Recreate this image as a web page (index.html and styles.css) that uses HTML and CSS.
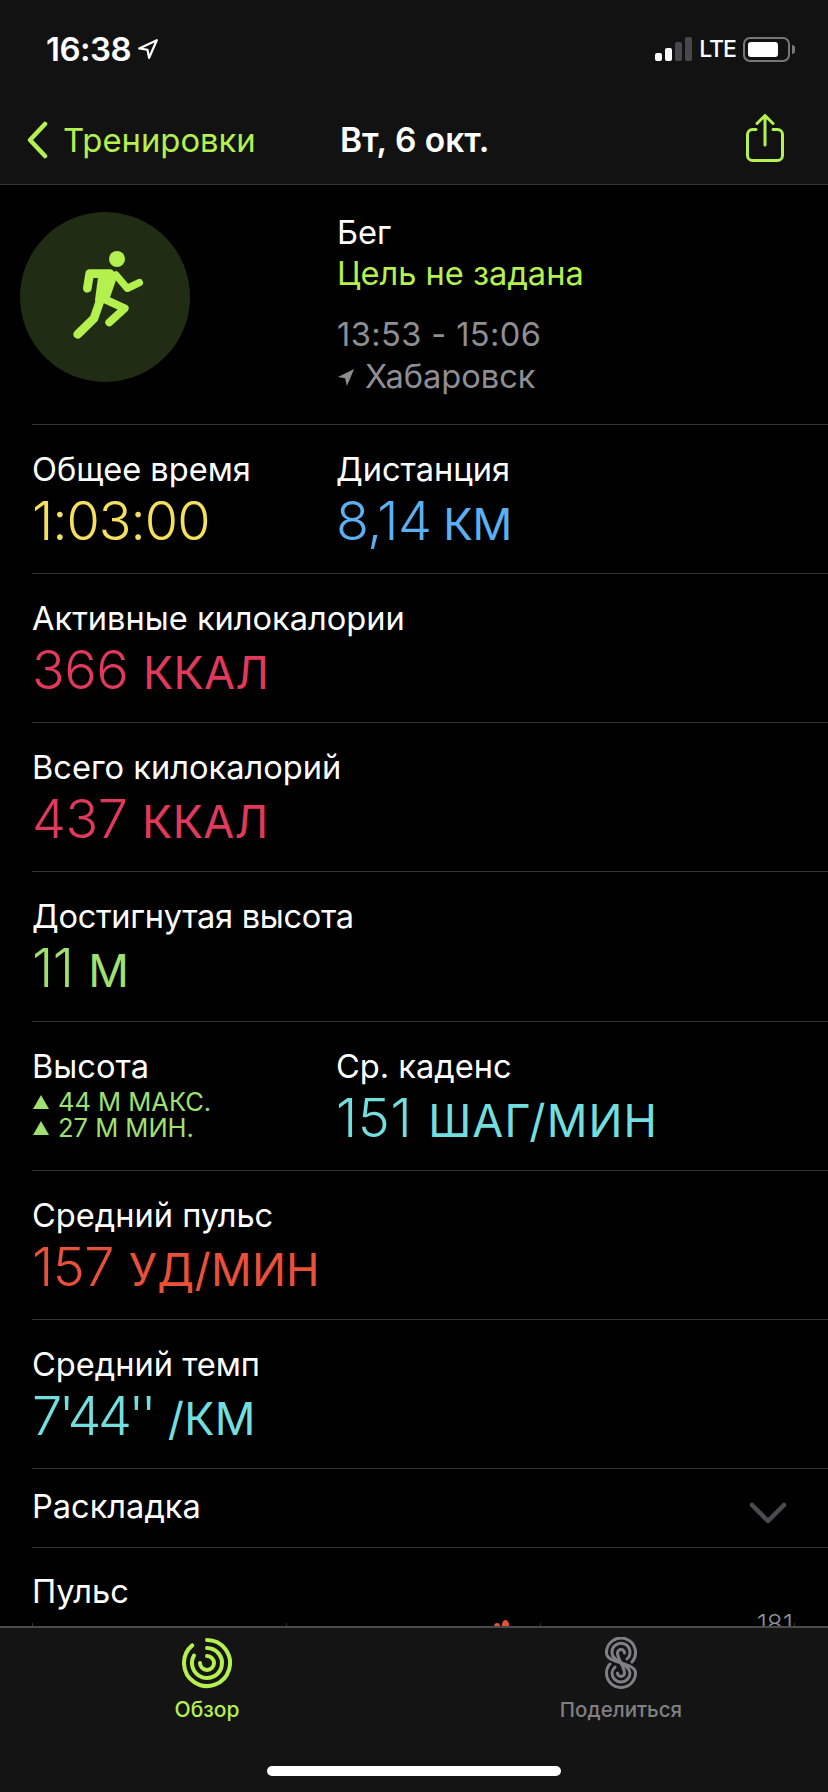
FILE: index.html
```html
<!DOCTYPE html>
<html lang="ru">
<head>
<meta charset="utf-8">
<title>Тренировка</title>
<link rel="stylesheet" href="styles.css">
</head>
<body>
<div class="screen">
  <header class="top">
    <div class="status">
      <div class="status-left">
        <span class="clock">16:38</span>
        <svg class="loc" viewBox="0 0 20 20"><path d="M18 2 2 9.500l7.500 1.200L11 18z" fill="none" stroke="#fff" stroke-width="2" stroke-linejoin="round"/></svg>
      </div>
      <div class="status-right">
        <div class="signal"><i class="b1 on"></i><i class="b2 on"></i><i class="b3"></i><i class="b4"></i></div>
        <span class="lte">LTE</span>
        <div class="battery"><div class="battery-fill"></div></div>
        <div class="battery-cap"></div>
      </div>
    </div>
    <nav class="nav">
      <div class="back">
        <svg class="chev" viewBox="0 0 24 38"><path d="M20 3 5 19l15 16" fill="none" stroke="#b4f04e" stroke-width="4.500" stroke-linecap="round" stroke-linejoin="round"/></svg>
        <span>Тренировки</span>
      </div>
      <div class="nav-title">Вт, 6 окт.</div>
      <svg class="share" viewBox="0 0 38 48"><path d="M10 15.500H6.500a5 5 0 0 0-5 5v21a5 5 0 0 0 5 5h25a5 5 0 0 0 5-5v-21a5 5 0 0 0-5-5H27M19 31V2M11 9.500l8-8 8 8" fill="none" stroke="#b4f04e" stroke-width="3" stroke-linecap="round" stroke-linejoin="round"/></svg>
    </nav>
  </header>
  <main class="content">
    <section class="hero">
      <div class="hero-icon">
        <svg class="runner" viewBox="30 36 510 510">
          <circle cx="321" cy="177" r="24" fill="#b4f04e"/>
          <g fill="none" stroke="#b4f04e" stroke-linecap="round" stroke-linejoin="round">
            <path d="M300 221H239L232 265" stroke-width="26"/>
            <path d="M318 225 352 265 388 248" stroke-width="22"/>
            <path d="M296 228 252 355 203 403" stroke-width="26"/>
            <path d="M285 298 344 325 298 367" stroke-width="24"/>
            <path d="M272 225H316L290 300H262Z" fill="#b4f04e" stroke-width="14"/>
          </g>
        </svg>
      </div>
      <div class="hero-text">
        <div class="label">Бег</div>
        <div class="label lime">Цель не задана</div>
        <div class="label grey gap times">13:53 - 15:06</div>
        <div class="label grey place"><svg class="loc2" viewBox="0 0 20 20"><path d="M19 1 1 10l8 1.500L11 20z" fill="#8e8e93"/></svg>Хабаровск</div>
      </div>
    </section>

    <section class="row split">
      <div class="cell"><div class="label">Общее время</div><div class="value yellow">1:03:00</div></div>
      <div class="cell"><div class="label">Дистанция</div><div class="value blue">8,14 <span class="unit narrow">КМ</span></div></div>
    </section>
    <section class="row"><div class="label">Активные килокалории</div><div class="value red">366 <span class="unit">ККАЛ</span></div></section>
    <section class="row"><div class="label">Всего килокалорий</div><div class="value red">437 <span class="unit">ККАЛ</span></div></section>
    <section class="row"><div class="label snug">Достигнутая высота</div><div class="value green">11 <span class="unit">М</span></div></section>
    <section class="row split">
      <div class="cell">
        <div class="label">Высота</div>
        <div class="minis">
          <div class="mini"><svg class="tri" viewBox="0 0 16 14"><path d="M8 0l8 14H0z"/></svg>44 М МАКС.</div>
          <div class="mini"><svg class="tri" viewBox="0 0 16 14"><path d="M8 0l8 14H0z"/></svg>27 М МИН.</div>
        </div>
      </div>
      <div class="cell"><div class="label">Ср. каденс</div><div class="value teal wide-num">151 <span class="unit wide">ШАГ/МИН</span></div></div>
    </section>
    <section class="row"><div class="label">Средний пульс</div><div class="value orange">157 <span class="unit">УД/МИН</span></div></section>
    <section class="row"><div class="label">Средний темп</div><div class="value teal"><span class="tight">7'44''</span> <span class="unit">/КМ</span></div></section>
    <section class="row-short">
      <div class="label">Раскладка</div>
      <svg class="down" viewBox="0 0 38 22"><path d="M3 3l16 16L35 3" fill="none" stroke="#4c4c4f" stroke-width="4.500" stroke-linecap="round" stroke-linejoin="round"/></svg>
    </section>
    <section class="pulse">
      <div class="label">Пульс</div>
      <div class="chart">
        <i class="tick t1"></i><i class="tick t2"></i><i class="tick t3"></i><i class="tick t4"></i>
        <i class="dot d1"></i><i class="dot d2"></i>
        <span class="chart-max">181</span>
      </div>
    </section>
  </main>
  <footer class="tabbar">
    <div class="tabs">
      <div class="tab active">
        <svg class="tab-icon" viewBox="0 0 52 52" fill="none" stroke="#b4f04e" stroke-width="4" stroke-linecap="round">
          <path d="M26 3A23 23 0 1 1 11.200 8.400"/>
          <path d="M26 11A15 15 0 1 1 13 18.500"/>
          <path d="M26 19A7 7 0 1 1 19 26"/>
        </svg>
        <span>Обзор</span>
      </div>
      <div class="tab">
        <svg class="tab-icon" viewBox="-10 0 52 52" fill="none" stroke="#808084" stroke-width="3" stroke-linecap="round">
          <path d="M27 25A14.500 14.500 0 1 0 1.500 16C1.500 27 30.500 25 30.500 36A14.500 14.500 0 1 1 1.500 36C1.500 32 3 29 5 27"/>
          <path d="M22 22A9 9 0 1 0 7 16C7 25 25 27 25 36A9 9 0 1 1 7 36C7 34 8 32 10 30"/>
          <path d="M19.500 16A3.500 3.500 0 1 0 12.500 16C12.500 22 19.500 30 19.500 36A3.500 3.500 0 1 1 12.500 36"/>
        </svg>
        <span>Поделиться</span>
      </div>
    </div>
    <div class="home"></div>
  </footer>
</div>
</body>
</html>
```
FILE: styles.css
```css
* { box-sizing: border-box; }
html, body { margin: 0; padding: 0; background: #000; }
.screen {
  width: 828px; height: 1792px; display: flex; flex-direction: column; overflow: hidden;
  background: #000; color: #fff; font-family: Inter, "Liberation Sans", sans-serif;
}
.top { height: 185px; flex: none; background: #121212; border-bottom: 1px solid #333; display: flex; flex-direction: column; }
.status { height: 96px; padding: 30px 33px 0 46px; display: flex; justify-content: space-between; align-items: flex-start; }
.status-left { display: flex; align-items: center; gap: 6px; }
.clock { font-size: 33px; font-weight: 600; letter-spacing: -0.5px; line-height: 38px; }
.loc { width: 22px; height: 22px; }
.status-right { display: flex; align-items: center; height: 38px; }
.signal { display: flex; align-items: flex-end; gap: 3px; height: 24px; margin-right: 7px; }
.signal i { display: block; width: 7px; background: #48484a; border-radius: 2px; }
.signal i.on { background: #fff; }
.b1 { height: 8px; } .b2 { height: 13px; } .b3 { height: 19px; } .b4 { height: 24px; }
.lte { font-size: 23px; font-weight: 500; letter-spacing: -1px; margin-right: 7px; }
.battery { width: 47px; height: 25px; border: 2px solid #77777a; border-radius: 7px; padding: 3px; }
.battery-fill { width: 30px; height: 100%; background: #fff; border-radius: 3px; }
.battery-cap { width: 3px; height: 9px; background: #77777a; border-radius: 0 3px 3px 0; margin-left: 2px; }
.nav { flex: 1; position: relative; display: flex; align-items: center; justify-content: space-between; padding: 0 44px 0 25px; }
.back { display: flex; align-items: center; gap: 14px; color: #b4f04e; font-size: 32.800px; }
.chev { width: 24px; height: 38px; }
.nav-title { font-size: 33.500px; font-weight: 600; position: absolute; left: 340px; }
.share { width: 38px; height: 48px; margin-bottom: 4px; }

.content { flex: 1; min-height: 0; overflow: hidden; }
.label { font-size: 32.600px; line-height: 40px; color: #fff; white-space: nowrap; }
.snug { letter-spacing: -0.3px; }
.lime { color: #b4f04e; }
.grey { color: #8e8e93; }
.gap { margin-top: 20px; }
.times { letter-spacing: 0.4px; }
.hero { height: 239px; display: flex; padding: 27px 0 0 20px; }
.hero-icon { width: 170px; height: 170px; border-radius: 50%; background: #212c15; flex: none; margin-right: 147px; }
.runner { display: block; width: 170px; height: 170px; }
.hero-text .label { line-height: 41px; }
.hero-text .gap { margin-top: 20px; }
.place { display: flex; align-items: center; gap: 10px; margin-top: 1px; }
.loc2 { width: 18px; height: 18px; }
.row, .row-short, .pulse { margin-left: 32px; border-top: 1px solid #333; }
.row { height: 149.170px; padding: 24px 0 0; }
.split { display: flex; }
.cell { width: 304px; }
.value { font-size: 54px; line-height: 60px; font-weight: 350; letter-spacing: -0.5px; white-space: nowrap; margin-top: 2px; }
.unit { font-size: 45px; font-weight: 400; letter-spacing: 0.3px; }
.unit.narrow { font-size: 44px; letter-spacing: -0.3px; }
.unit.wide { letter-spacing: 1.100px; }
.wide-num { letter-spacing: 0.6px; }
.tight { letter-spacing: -3.500px; }
.yellow { color: #f5e05e; letter-spacing: -1px; } .blue { color: #5ab0f0; word-spacing: -3px; } .red { color: #e0395c; }
.green { color: #a0e070; } .teal { color: #72dede; } .orange { color: #e8503a; }
.minis { margin-top: 3px; }
.mini { display: flex; align-items: center; gap: 9px; font-size: 25.500px; line-height: 26px; color: #a0e070; padding-left: 1px; }
.tri { width: 16px; height: 14px; fill: #a0e070; }
.row-short { height: 78.500px; display: flex; align-items: center; justify-content: space-between; padding: 0 41px 4px 0; }
.down { width: 38px; height: 22px; margin-top: 14px; }
.pulse { padding-top: 23px; }
.chart { position: relative; height: 30px; margin-top: 3px; }
.tick { position: absolute; top: 9px; width: 1px; height: 10px; background: #333; }
.t1 { left: 0; } .t2 { left: 254px; } .t3 { left: 508px; } .t4 { left: 762px; }
.dot { position: absolute; background: #e8503a; border-radius: 50%; }
.d1 { left: 462px; top: 9px; width: 6px; height: 8px; }
.d2 { left: 470px; top: 6px; width: 7px; height: 10px; }
.chart-max { position: absolute; right: 35px; top: -3px; font-size: 26px; line-height: 26px; font-weight: 300; color: #8e8e93; }
.tabbar { height: 166px; flex: none; background: #141414; border-top: 2px solid #4a4a4a; position: relative; }
.tabs { display: flex; }
.tab { width: 414px; display: flex; flex-direction: column; align-items: center; color: #808084; font-size: 20.500px; font-weight: 500; }
.tab.active { color: #b4f04e; font-size: 21px; }
.tab-icon { width: 52px; height: 52px; margin-top: 9px; margin-bottom: 8px; }
.home { position: absolute; left: 267px; width: 294px; bottom: 16px; height: 10px; background: #fff; border-radius: 5px; }
```
